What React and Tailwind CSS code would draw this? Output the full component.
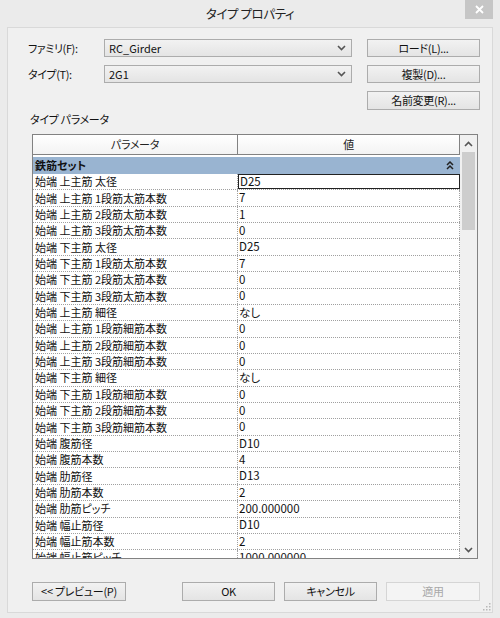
import React from "react";

const rows = [
  ["始端 上主筋 太径", "D25"],
  ["始端 上主筋 1段筋太筋本数", "7"],
  ["始端 上主筋 2段筋太筋本数", "1"],
  ["始端 上主筋 3段筋太筋本数", "0"],
  ["始端 下主筋 太径", "D25"],
  ["始端 下主筋 1段筋太筋本数", "7"],
  ["始端 下主筋 2段筋太筋本数", "0"],
  ["始端 下主筋 3段筋太筋本数", "0"],
  ["始端 上主筋 細径", "なし"],
  ["始端 上主筋 1段筋細筋本数", "0"],
  ["始端 上主筋 2段筋細筋本数", "0"],
  ["始端 上主筋 3段筋細筋本数", "0"],
  ["始端 下主筋 細径", "なし"],
  ["始端 下主筋 1段筋細筋本数", "0"],
  ["始端 下主筋 2段筋細筋本数", "0"],
  ["始端 下主筋 3段筋細筋本数", "0"],
  ["始端 腹筋径", "D10"],
  ["始端 腹筋本数", "4"],
  ["始端 肋筋径", "D13"],
  ["始端 肋筋本数", "2"],
  ["始端 肋筋ピッチ", "200.000000"],
  ["始端 幅止筋径", "D10"],
  ["始端 幅止筋本数", "2"],
  ["始端 幅止筋ピッチ", "1000.000000"],
];

function Chevron({ up = false, className = "" }) {
  return (
    <svg width="9" height="6" viewBox="0 0 9 6" className={className}>
      <polyline
        points={up ? "1,5 4.5,1.5 8,5" : "1,1 4.5,4.5 8,1"}
        fill="none"
        stroke="#555"
        strokeWidth="1.6"
      />
    </svg>
  );
}

function Combo({ value }) {
  return (
    <div className="w-[248px] h-[18px] border border-[#acacac] bg-linear-to-b from-[#f2f2f2] to-[#e4e4e4] flex items-center pl-[4px] pr-[5px]">
      <span className="flex-1 text-[11px] text-[#111]">{value}</span>
      <Chevron />
    </div>
  );
}

function Btn({ children, w = "w-[113px]", h = "h-[18px]", disabled = false }) {
  return (
    <div
      className={`${w} ${h} border flex items-center justify-center text-[11px] tracking-[-0.3px] ${
        disabled
          ? "border-[#d5d5d5] bg-[#f4f4f4] text-[#a8a8a8]"
          : "border-[#acacac] bg-linear-to-b from-[#f2f2f2] to-[#e4e4e4] text-[#111]"
      }`}
    >
      {children}
    </div>
  );
}

export default function App() {
  return (
    <div className="w-[500px] h-[618px] bg-[#ebebeb] flex flex-col relative font-['Noto_Sans_CJK_JP',sans-serif] [font-feature-settings:'palt'] leading-none select-none">
      {/* Title bar */}
      <div className="h-[27px] flex items-center justify-center text-[12.5px] tracking-[-0.4px] text-[#222] pt-[2px]">
        タイプ プロパティ
      </div>
      <div className="absolute top-0 right-[7px] w-[28px] h-[19px] bg-[#c6c6c6] flex items-center justify-center">
        <svg width="9" height="9" viewBox="0 0 9 9">
          <path d="M1 1L8 8M8 1L1 8" stroke="#fff" strokeWidth="1.8" />
        </svg>
      </div>

      {/* Client area */}
      <div className="mx-[7px] mb-[5px] flex-1 border border-[#d9d9d9] bg-[#f0f0f0] pl-[20px] pt-[11px] relative">
        <div className="flex items-center h-[18px]">
          <div className="w-[76px] text-[11px] tracking-[-0.4px] text-[#111]">ファミリ(F):</div>
          <Combo value="RC_Girder" />
          <div className="ml-[15px]">
            <Btn>ロード(L)...</Btn>
          </div>
        </div>
        <div className="flex items-center h-[18px] mt-[8px]">
          <div className="w-[76px] text-[11px] tracking-[-0.4px] text-[#111]">タイプ(T):</div>
          <Combo value="2G1" />
          <div className="ml-[15px]">
            <Btn>複製(D)...</Btn>
          </div>
        </div>
        <div className="flex mt-[8px] pl-[339px]">
          <Btn h="h-[19px]">名前変更(R)...</Btn>
        </div>
        <div className="mt-[3px] h-[12px] pl-[2px] text-[11px] tracking-[-0.3px] text-[#111] flex items-center">
          タイプ パラメータ
        </div>

        {/* Table */}
        <div className="mt-[9px] ml-[4px] w-[446px] h-[425px] border border-[#828282] bg-white flex overflow-hidden">
          <div className="w-[427px] flex flex-col">
            <div className="h-[20px] flex border-b border-[#828282] bg-linear-to-b from-[#ffffff] to-[#f3f3f3] text-[11px] tracking-[-0.3px] text-[#222] shrink-0">
              <div className="w-[205px] border-r border-[#828282] flex items-center justify-center">
                パラメータ
              </div>
              <div className="flex-1 border-r border-[#828282] flex items-center justify-center">
                値
              </div>
            </div>
            <div className="h-[2px] shrink-0 bg-white" />
            <div className="h-[17px] shrink-0 bg-[#99b4d1] flex items-center pl-[2px] pr-[6px] text-[11px] font-bold text-[#111]">
              <span className="flex-1">鉄筋セット</span>
              <svg width="8" height="9" viewBox="0 0 8 9">
                <polyline points="1,4 4,1 7,4" fill="none" stroke="#222" strokeWidth="1.5" />
                <polyline points="1,8 4,5 7,8" fill="none" stroke="#222" strokeWidth="1.5" />
              </svg>
            </div>
            <div className="flex-1 overflow-hidden">
              {rows.map(([k, v], i) => (
                <div
                  key={i}
                  className="h-[16.36px] flex border-b border-dotted border-[#a0a0a0] text-[#111]"
                >
                  <div className="w-[205px] border-r border-dotted border-[#a0a0a0] flex items-center pl-[2px] whitespace-nowrap text-[11px]">
                    {k}
                  </div>
                  <div
                    className={`flex-1 flex items-center pl-[1px] text-[11.5px] ${
                      i === 0 ? "border border-[#222]" : "border-r border-dotted border-[#a0a0a0]"
                    }`}
                  >
                    {v}
                  </div>
                </div>
              ))}
            </div>
          </div>
          {/* Scrollbar */}
          <div className="w-[17px] bg-[#f0f0f0] flex flex-col">
            <div className="h-[17px] flex items-center justify-center">
              <Chevron up />
            </div>
            <div className="h-[78px] mx-[2px] bg-[#cdcdcd]" />
            <div className="flex-1" />
            <div className="h-[17px] flex items-center justify-center">
              <Chevron />
            </div>
          </div>
        </div>

        {/* Bottom buttons */}
        <div className="flex mt-[23px] ml-[4px]">
          <Btn w="w-[94px]" h="h-[19px]">&lt;&lt; プレビュー(P)</Btn>
          <div className="ml-[56px]">
            <Btn w="w-[93px]" h="h-[19px]">OK</Btn>
          </div>
          <div className="ml-[9px]">
            <Btn w="w-[93px]" h="h-[19px]">キャンセル</Btn>
          </div>
          <div className="ml-[9px]">
            <Btn w="w-[94px]" h="h-[19px]" disabled>適用</Btn>
          </div>
        </div>

        {/* Resize grip */}
        <svg className="absolute right-[1px] bottom-[1px]" width="8" height="8" viewBox="0 0 8 8">
          <rect x="6" y="0" width="1.5" height="1.5" fill="#b8b8b8" />
          <rect x="3" y="3" width="1.5" height="1.5" fill="#b8b8b8" />
          <rect x="6" y="3" width="1.5" height="1.5" fill="#b8b8b8" />
          <rect x="0" y="6" width="1.5" height="1.5" fill="#b8b8b8" />
          <rect x="3" y="6" width="1.5" height="1.5" fill="#b8b8b8" />
          <rect x="6" y="6" width="1.5" height="1.5" fill="#b8b8b8" />
        </svg>
      </div>
    </div>
  );
}
